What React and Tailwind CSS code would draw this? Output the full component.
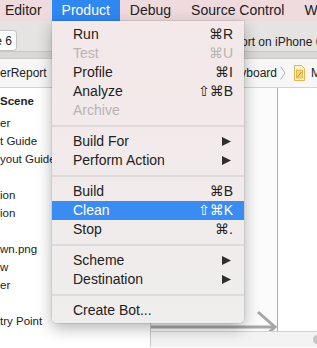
import React from "react";

const MENU = [
  { label: "Run", shortcut: "⌘R" },
  { label: "Test", shortcut: "⌘U", disabled: true },
  { label: "Profile", shortcut: "⌘I" },
  { label: "Analyze", shortcut: "⇧⌘B" },
  { label: "Archive", disabled: true },
  "sep",
  { label: "Build For", submenu: true },
  { label: "Perform Action", submenu: true },
  "sep",
  { label: "Build", shortcut: "⌘B" },
  { label: "Clean", shortcut: "⇧⌘K", active: true },
  { label: "Stop", shortcut: "⌘." },
  "sep",
  { label: "Scheme", submenu: true },
  { label: "Destination", submenu: true },
  "sep",
  { label: "Create Bot..." },
];

const OUTLINE = [
  "er",
  "t Guide",
  "yout Guide",
  "",
  "ion",
  "ion",
  "",
  "wn.png",
  "w",
  "er",
  "",
  "try Point",
];

const MenuItem = ({ item }) => {
  const color = item.active
    ? "bg-[#3a8cf3] text-white"
    : item.disabled
    ? "text-[#b8b3b3]"
    : "text-[#222222]";
  return (
    <div className={`flex items-center h-[19px] pl-[21px] pr-[11px] ${color}`}>
      <span className="flex-1 whitespace-nowrap">{item.label}</span>
      {item.shortcut && (
        <span className="whitespace-nowrap">{item.shortcut}</span>
      )}
      {item.submenu && (
        <svg width="9" height="9" viewBox="0 0 9 9" className="mr-[2px]">
          <polygon points="0,0 9,4.5 0,9" fill="#2e2e2e" />
        </svg>
      )}
    </div>
  );
};

const ProductMenu = () => (
  <div className="absolute left-[52px] top-[21px] w-[192px] pt-[4px] pb-[3px] rounded-b-[5px] bg-gradient-to-b from-[#f4e8e9] to-[#efeded] shadow-[0_5px_16px_rgba(0,0,0,0.3),0_0_0_1px_rgba(0,0,0,0.07)] text-[14px]">
    {MENU.map((item, i) =>
      item === "sep" ? (
        <div key={i} className="h-[12px] flex items-center">
          <div className="h-[2px] w-full bg-[#dedada]" />
        </div>
      ) : (
        <MenuItem key={i} item={item} />
      )
    )}
  </div>
);

const StoryboardIcon = () => (
  <svg width="11" height="16" viewBox="0 0 11 16">
    <path d="M0.5 0.5 H7.5 L10.5 3.5 V15.5 H0.5 Z" fill="#fdf4d6" stroke="#e9b64c" />
    <rect x="2.5" y="5" width="6" height="8" fill="#f7d77a" stroke="#e3a93a" strokeWidth="0.8" />
    <path d="M3.5 12 L7.5 7" stroke="#c98a1f" strokeWidth="1" />
  </svg>
);

export default function App() {
  return (
    <div className="relative w-[317px] h-[348px] overflow-hidden bg-white font-['Liberation_Sans','DejaVu_Sans',sans-serif] text-[#222222]">
      {/* menu bar */}
      <div className="flex h-[21px] bg-[#efdbde] text-[14px] ml-[-5px]">
        <div className="shrink-0 px-[10px] leading-[21px]">Editor</div>
        <div className="shrink-0 px-[10px] leading-[21px] bg-[#2f87f2] text-white">Product</div>
        <div className="shrink-0 px-[10px] leading-[21px]">Debug</div>
        <div className="shrink-0 px-[10px] leading-[21px] whitespace-nowrap">Source Control</div>
        <div className="shrink-0 px-[10px] leading-[21px]">Window</div>
      </div>

      {/* toolbar */}
      <div className="flex items-start h-[31px] bg-[#e6e3e3] border-b border-[#c9c6c6]">
        <div className="shrink-0 mt-[9px] h-[21px] w-[17px] flex justify-end items-center overflow-hidden bg-white rounded-r-[4px] border border-l-0 border-[#c6c4c4] pr-[4px] text-[12px] whitespace-nowrap">
          <span className="shrink-0">iPhone 6</span>
        </div>
        <div className="ml-auto w-[76px] mt-[14px] leading-[14px] text-[12px] whitespace-nowrap overflow-hidden">
          ort on iPhone 6
        </div>
      </div>
      <div className="h-[7px] bg-[#dad7d7] border-b border-[#cfcccc]" />

      {/* jump bar */}
      <div className="flex items-center h-[29px] bg-[#f7f7f7] border-b border-[#d3d3d3] text-[12px] overflow-hidden whitespace-nowrap">
        <div className="shrink-0 w-[152px] flex items-center">
          <span>erReport</span>
        </div>
        <div className="shrink-0 w-[125px] flex justify-end overflow-hidden">
          <span className="shrink-0">Main.storyboard</span>
        </div>
        <svg width="6" height="14" viewBox="0 0 6 14" className="shrink-0 ml-[3px]">
          <path d="M0.5 0.5 L5 7 L0.5 13.5" stroke="#b5b5b5" fill="none" />
        </svg>
        <div className="shrink-0 ml-[8px]">
          <StoryboardIcon />
        </div>
        <span className="shrink-0 ml-[6px]">Main.storyboard</span>
      </div>

      {/* content */}
      <div className="flex h-[259px]">
        <div className="shrink-0 w-[151px] border-r border-[#c8c8c8] bg-white pt-[4px] text-[11.5px] whitespace-nowrap">
          <div className="h-[18px] leading-[18px] font-bold">Scene</div>
          <div className="mt-[4px]">
            {OUTLINE.map((t, i) => (
              <div key={i} className="h-[18px] leading-[18px]">
                {t}
              </div>
            ))}
          </div>
        </div>
        <div className="flex-1 flex flex-col">
          <div className="relative flex-1 flex overflow-hidden bg-[#fbfbfb]">
            <div className="w-[126px]" />
            <div className="flex-1 border-l border-[#acacac] bg-white" />
            <svg
              width="140"
              height="50"
              viewBox="0 0 140 50"
              className="absolute left-0 top-[214px]"
            >
              <path d="M0 25 H123" stroke="#a6a6a6" strokeWidth="3" />
              <path d="M107 10 L124 25 L107 40" stroke="#a6a6a6" strokeWidth="3" fill="none" />
            </svg>
          </div>
          <div className="h-[16px] flex justify-end items-center bg-[#f3f3f3] border-t border-[#d2d2d2]">
            <div className="w-[9px] h-[9px] rounded-full bg-[#c4c4c4] mr-[-5px]" />
          </div>
        </div>
      </div>

      <ProductMenu />
    </div>
  );
}
